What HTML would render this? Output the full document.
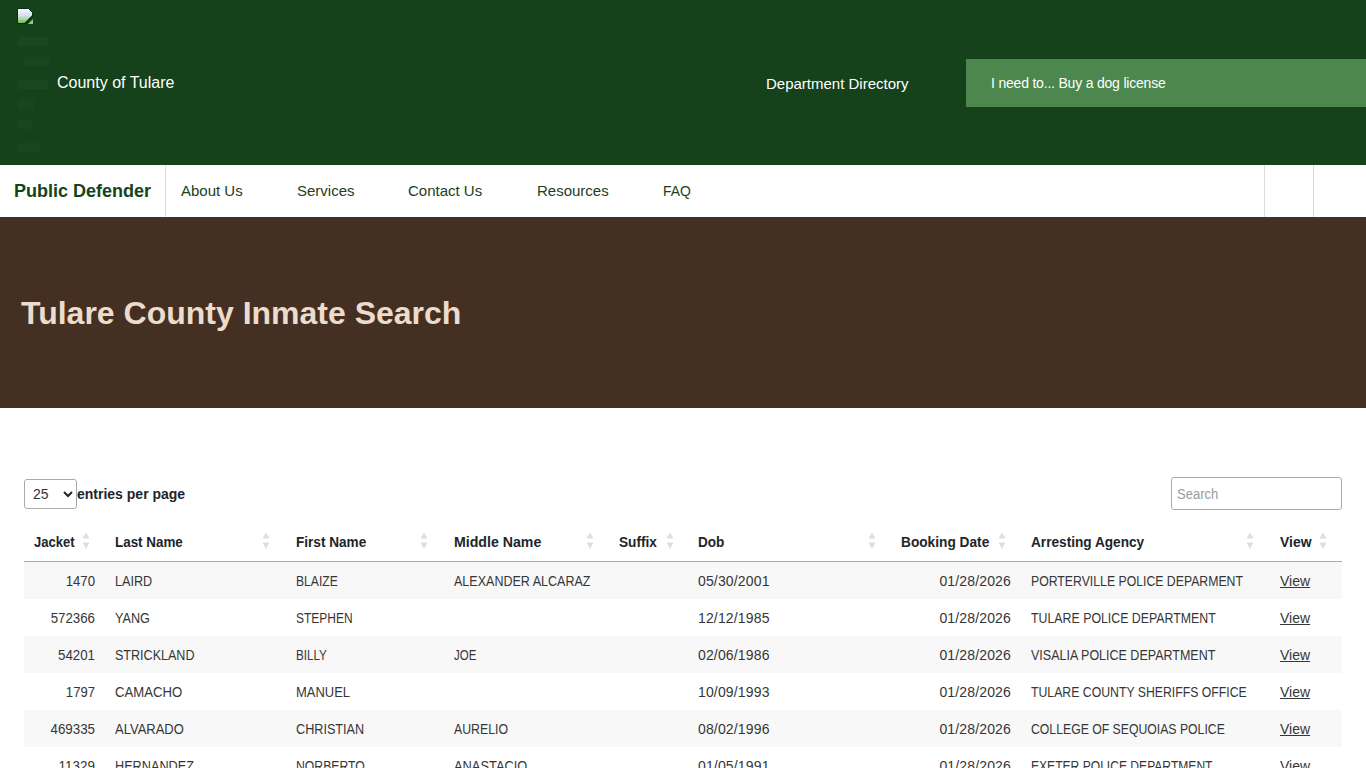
<!DOCTYPE html>
<html><head><meta charset="utf-8">
<style>
*{box-sizing:border-box;margin:0;padding:0}
html,body{width:1366px;height:768px;overflow:hidden;background:#fff;font-family:"Liberation Sans",sans-serif;}
.hdr{position:absolute;left:0;top:0;width:1366px;height:165px;background:#15421a;}
.brk{position:absolute;left:17px;top:8px;width:16px;height:16px;}
.alt{position:absolute;left:18px;color:#1f4a22;font-size:11px;line-height:12px;}
.cot{position:absolute;left:57px;top:74px;color:#fff;font-size:16px;line-height:18px;}
.dd{position:absolute;left:766px;top:75px;color:#fff;font-size:15px;line-height:18px;}
.btn{position:absolute;left:966px;top:59px;width:400px;height:48px;background:#4c874e;}
.btn span{position:absolute;left:25px;top:16px;color:#fff;font-size:14px;line-height:16px;letter-spacing:-0.2px;}
.nav{position:absolute;left:0;top:165px;width:1366px;height:52px;background:#fff;}
.pd{position:absolute;left:14px;top:181px;color:#16431a;font-size:18px;font-weight:bold;line-height:20px;}
.vl{position:absolute;top:165px;width:1px;height:52px;background:#dcdcdc;}
.ni{position:absolute;top:182px;color:#1d4020;font-size:15px;line-height:18px;}
.hero{position:absolute;left:0;top:217px;width:1366px;height:191px;background:#443022;}
.hero h1{position:absolute;left:21px;top:78px;color:#ecdccc;font-size:32px;font-weight:bold;line-height:36px;}
.sel{position:absolute;left:24px;top:479px;width:53px;height:30px;border:1px solid #aaa;border-radius:3px;font-size:14px;color:#333;}
.sel span{position:absolute;left:8px;top:6px;}
.sel svg{position:absolute;left:38px;top:10px;}
.epp{position:absolute;left:77px;top:486px;font-size:14px;font-weight:bold;color:#212529;line-height:16px;}
.srch{position:absolute;left:1171px;top:477px;width:171px;height:33px;border:1px solid #aaa;border-radius:3px;}
.srch span{position:absolute;left:5px;top:8px;color:#9b9b9b;font-size:14px;line-height:16px;transform:scaleX(.93);transform-origin:0 0;}
.th{position:absolute;top:534px;transform-origin:0 0;white-space:nowrap;font-size:14px;font-weight:bold;color:#212529;line-height:16px;}
.sort{position:absolute;top:532px;}
.hline{position:absolute;left:24px;top:561px;width:1318px;height:1px;background:#ababab;}
.row{position:absolute;left:24px;width:1318px;height:37px;}
.odd{background:#f8f8f8;}
.td{position:absolute;font-size:14px;color:#363636;line-height:16px;}
.uc{transform-origin:0 0;white-space:nowrap}
.dt{font-size:14px;letter-spacing:0}
.r{text-align:right}
.v{text-decoration:underline;}
</style></head><body>
<div class="hdr">
  <svg class="brk" viewBox="0 0 16 16"><defs><linearGradient id="g" x1="0" y1="0" x2="0" y2="1"><stop offset="0" stop-color="#f4fbf2"/><stop offset=".45" stop-color="#dcdff4"/><stop offset=".7" stop-color="#a9d9a0"/><stop offset="1" stop-color="#5fae4f"/></linearGradient></defs><path d="M0.5 0.5H11.5L15.5 4.5V9L8.5 15.5H0.5Z" fill="url(#g)" stroke="#0f2a12" stroke-width="1"/><path d="M7.5 16L16 7.5" stroke="#0a2a0c" stroke-width="1.6"/><path d="M11 16L16 11V16Z" fill="#8cc888"/></svg>
  <div class="alt" style="top:36px">&#8203;<span style="display:inline-block;width:30px;height:9px;background:#194720"></span></div>
  <div class="alt" style="top:56px"><span style="display:inline-block;width:26px;height:9px;margin-left:6px;background:#184620"></span></div>
  <div class="alt" style="top:79px"><span style="display:inline-block;width:30px;height:9px;background:#194720"></span></div>
  <div class="alt" style="top:99px"><span style="display:inline-block;width:16px;height:9px;background:#184620"></span></div>
  <div class="alt" style="top:119px"><span style="display:inline-block;width:14px;height:9px;background:#184620"></span></div>
  <div class="alt" style="top:142px"><span style="display:inline-block;width:22px;height:9px;background:#184620"></span></div>
  <div class="cot">County of Tulare</div>
  <div class="dd">Department Directory</div>
  <div class="btn"><span>I need to... Buy a dog license</span></div>
</div>
<div class="nav"></div>
<div class="pd">Public Defender</div>
<div class="vl" style="left:165px"></div>
<div class="vl" style="left:1264px"></div>
<div class="vl" style="left:1313px"></div>
<div class="ni" style="left:181px">About Us</div>
<div class="ni" style="left:297px">Services</div>
<div class="ni" style="left:408px">Contact Us</div>
<div class="ni" style="left:537px">Resources</div>
<div class="ni" style="left:663px;transform:scaleX(.93);transform-origin:0 0">FAQ</div>
<div class="hero"><h1>Tulare County Inmate Search</h1></div>

<div class="sel"><span>25</span><svg width="10" height="8" viewBox="0 0 10 8"><path d="M1 2l4 4 4-4" stroke="#212529" stroke-width="2" fill="none"/></svg></div>
<div class="epp">entries per page</div>
<div class="srch"><span>Search</span></div>

<div id="tbl">
<div class="th" style="left:34px;transform:scaleX(0.932);">Jacket</div>
<svg class="sort" style="left:82px" width="8" height="18" viewBox="0 0 8 18"><path d="M4 0.5L7.5 6.5H0.5Z M4 17L7.5 10.5H0.5Z" fill="#dedede"/></svg>
<div class="th" style="left:115px;transform:scaleX(0.958);">Last Name</div>
<svg class="sort" style="left:262px" width="8" height="18" viewBox="0 0 8 18"><path d="M4 0.5L7.5 6.5H0.5Z M4 17L7.5 10.5H0.5Z" fill="#dedede"/></svg>
<div class="th" style="left:296px;transform:scaleX(0.970);">First Name</div>
<svg class="sort" style="left:420px" width="8" height="18" viewBox="0 0 8 18"><path d="M4 0.5L7.5 6.5H0.5Z M4 17L7.5 10.5H0.5Z" fill="#dedede"/></svg>
<div class="th" style="left:454px;transform:scaleX(1.011);">Middle Name</div>
<svg class="sort" style="left:586px" width="8" height="18" viewBox="0 0 8 18"><path d="M4 0.5L7.5 6.5H0.5Z M4 17L7.5 10.5H0.5Z" fill="#dedede"/></svg>
<div class="th" style="left:619px;transform:scaleX(0.974);">Suffix</div>
<svg class="sort" style="left:666px" width="8" height="18" viewBox="0 0 8 18"><path d="M4 0.5L7.5 6.5H0.5Z M4 17L7.5 10.5H0.5Z" fill="#dedede"/></svg>
<div class="th" style="left:698px;transform:scaleX(0.970);">Dob</div>
<svg class="sort" style="left:868px" width="8" height="18" viewBox="0 0 8 18"><path d="M4 0.5L7.5 6.5H0.5Z M4 17L7.5 10.5H0.5Z" fill="#dedede"/></svg>
<div class="th" style="left:901px;transform:scaleX(0.978);">Booking Date</div>
<svg class="sort" style="left:998px" width="8" height="18" viewBox="0 0 8 18"><path d="M4 0.5L7.5 6.5H0.5Z M4 17L7.5 10.5H0.5Z" fill="#dedede"/></svg>
<div class="th" style="left:1031px;transform:scaleX(0.974);">Arresting Agency</div>
<svg class="sort" style="left:1246px" width="8" height="18" viewBox="0 0 8 18"><path d="M4 0.5L7.5 6.5H0.5Z M4 17L7.5 10.5H0.5Z" fill="#dedede"/></svg>
<div class="th" style="left:1280px;transform:scaleX(0.994);">View</div>
<svg class="sort" style="left:1319px" width="8" height="18" viewBox="0 0 8 18"><path d="M4 0.5L7.5 6.5H0.5Z M4 17L7.5 10.5H0.5Z" fill="#dedede"/></svg>
<div class="row odd" style="top:562px"></div>
<div class="td r dt" style="top:573px;left:24px;width:71px;transform-origin:100% 0;transform:scaleX(0.942);">1470</div>
<div class="td uc" style="top:573px;left:115px;transform:scaleX(0.902);">LAIRD</div>
<div class="td uc" style="top:573px;left:296px;transform:scaleX(0.865);">BLAIZE</div>
<div class="td uc" style="top:573px;left:454px;transform:scaleX(0.895);">ALEXANDER ALCARAZ</div>
<div class="td dt" style="top:573px;left:698px;letter-spacing:.15px">05/30/2001</div>
<div class="td r dt" style="top:573px;left:880px;width:131px;letter-spacing:.15px">01/28/2026</div>
<div class="td uc" style="top:573px;left:1031px;transform:scaleX(0.876);">PORTERVILLE POLICE DEPARMENT</div>
<div class="td v dt" style="top:573px;left:1280px">View</div>
<div class="row" style="top:599px"></div>
<div class="td r dt" style="top:610px;left:24px;width:71px;transform-origin:100% 0;transform:scaleX(0.949);">572366</div>
<div class="td uc" style="top:610px;left:115px;transform:scaleX(0.903);">YANG</div>
<div class="td uc" style="top:610px;left:296px;transform:scaleX(0.856);">STEPHEN</div>
<div class="td uc" style="top:610px;left:454px;"></div>
<div class="td dt" style="top:610px;left:698px;letter-spacing:.15px">12/12/1985</div>
<div class="td r dt" style="top:610px;left:880px;width:131px;letter-spacing:.15px">01/28/2026</div>
<div class="td uc" style="top:610px;left:1031px;transform:scaleX(0.882);">TULARE POLICE DEPARTMENT</div>
<div class="td v dt" style="top:610px;left:1280px">View</div>
<div class="row odd" style="top:636px"></div>
<div class="td r dt" style="top:647px;left:24px;width:71px;transform-origin:100% 0;transform:scaleX(0.949);">54201</div>
<div class="td uc" style="top:647px;left:115px;transform:scaleX(0.896);">STRICKLAND</div>
<div class="td uc" style="top:647px;left:296px;transform:scaleX(0.832);">BILLY</div>
<div class="td uc" style="top:647px;left:454px;transform:scaleX(0.822);">JOE</div>
<div class="td dt" style="top:647px;left:698px;letter-spacing:.15px">02/06/1986</div>
<div class="td r dt" style="top:647px;left:880px;width:131px;letter-spacing:.15px">01/28/2026</div>
<div class="td uc" style="top:647px;left:1031px;transform:scaleX(0.893);">VISALIA POLICE DEPARTMENT</div>
<div class="td v dt" style="top:647px;left:1280px">View</div>
<div class="row" style="top:673px"></div>
<div class="td r dt" style="top:684px;left:24px;width:71px;transform-origin:100% 0;transform:scaleX(0.935);">1797</div>
<div class="td uc" style="top:684px;left:115px;transform:scaleX(0.939);">CAMACHO</div>
<div class="td uc" style="top:684px;left:296px;transform:scaleX(0.927);">MANUEL</div>
<div class="td uc" style="top:684px;left:454px;"></div>
<div class="td dt" style="top:684px;left:698px;letter-spacing:.15px">10/09/1993</div>
<div class="td r dt" style="top:684px;left:880px;width:131px;letter-spacing:.15px">01/28/2026</div>
<div class="td uc" style="top:684px;left:1031px;transform:scaleX(0.876);">TULARE COUNTY SHERIFFS OFFICE</div>
<div class="td v dt" style="top:684px;left:1280px">View</div>
<div class="row odd" style="top:710px"></div>
<div class="td r dt" style="top:721px;left:24px;width:71px;transform-origin:100% 0;transform:scaleX(0.953);">469335</div>
<div class="td uc" style="top:721px;left:115px;transform:scaleX(0.928);">ALVARADO</div>
<div class="td uc" style="top:721px;left:296px;transform:scaleX(0.903);">CHRISTIAN</div>
<div class="td uc" style="top:721px;left:454px;transform:scaleX(0.879);">AURELIO</div>
<div class="td dt" style="top:721px;left:698px;letter-spacing:.15px">08/02/1996</div>
<div class="td r dt" style="top:721px;left:880px;width:131px;letter-spacing:.15px">01/28/2026</div>
<div class="td uc" style="top:721px;left:1031px;transform:scaleX(0.874);">COLLEGE OF SEQUOIAS POLICE</div>
<div class="td v dt" style="top:721px;left:1280px">View</div>
<div class="row" style="top:747px"></div>
<div class="td r dt" style="top:758px;left:24px;width:71px;transform-origin:100% 0;transform:scaleX(0.961);">11329</div>
<div class="td uc" style="top:758px;left:115px;transform:scaleX(0.906);">HERNANDEZ</div>
<div class="td uc" style="top:758px;left:296px;transform:scaleX(0.872);">NORBERTO</div>
<div class="td uc" style="top:758px;left:454px;transform:scaleX(0.918);">ANASTACIO</div>
<div class="td dt" style="top:758px;left:698px;letter-spacing:.15px">01/05/1991</div>
<div class="td r dt" style="top:758px;left:880px;width:131px;letter-spacing:.15px">01/28/2026</div>
<div class="td uc" style="top:758px;left:1031px;transform:scaleX(0.863);">EXETER POLICE DEPARTMENT</div>
<div class="td v dt" style="top:758px;left:1280px">View</div>
</div><!--/tbl-->
<div class="hline"></div>
</body></html>
